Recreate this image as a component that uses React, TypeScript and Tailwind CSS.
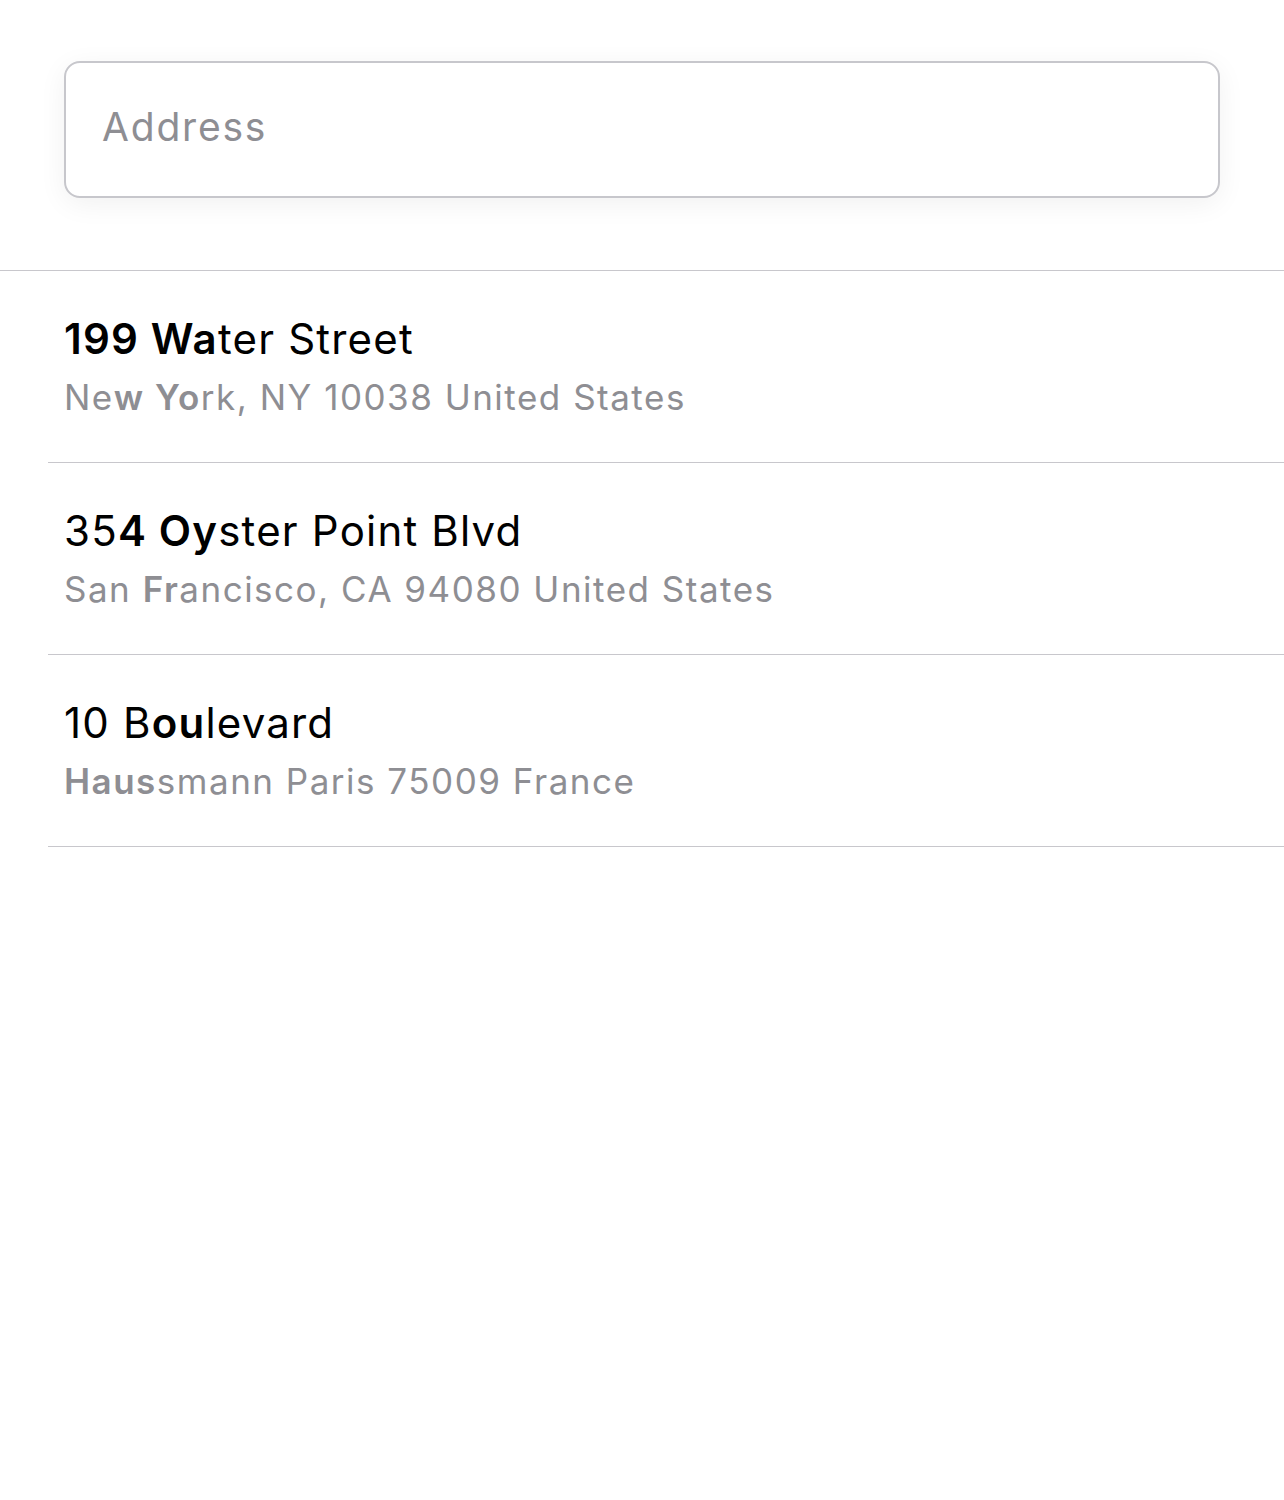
import React from "react";

type Part = { text: string; bold?: boolean };
type Place = { id: number; title: Part[]; subtitle: Part[] };

const places: Place[] = [
  {
    id: 1,
    title: [{ text: "199 Wa", bold: true }, { text: "ter Street" }],
    subtitle: [{ text: "Ne" }, { text: "w Yo", bold: true }, { text: "rk, NY 10038 United States" }],
  },
  {
    id: 2,
    title: [{ text: "35" }, { text: "4 Oy", bold: true }, { text: "ster Point Blvd" }],
    subtitle: [{ text: "San " }, { text: "Fr", bold: true }, { text: "ancisco, CA 94080 United States" }],
  },
  {
    id: 3,
    title: [{ text: "10 B" }, { text: "ou", bold: true }, { text: "levard" }],
    subtitle: [{ text: "Haus", bold: true }, { text: "smann Paris 75009 France" }],
  },
];

function Highlight({ parts }: { parts: Part[] }) {
  return (
    <>
      {parts.map((p, i) => (
        <span key={i} className={p.bold ? "font-semibold" : "font-normal"}>
          {p.text}
        </span>
      ))}
    </>
  );
}

export default function App() {
  return (
    <div className="min-h-[1500px] bg-white font-['Inter','Noto_Sans',sans-serif] antialiased">
      {/* search box */}
      <div className="h-[271px] border-b border-[#c8c7cc] pl-[64px] pr-[64px] pt-[61px]">
        <div className="flex h-[137px] items-center rounded-[16px] border-2 border-[#c7c7cc] bg-white pb-[4px] pl-[36px] shadow-[0_6px_28px_rgba(0,0,0,0.06)]">
          <input
            className="w-full bg-transparent text-[39px] tracking-[1.8px] text-black outline-none placeholder:text-[#8e8e93]"
            placeholder="Address"
          />
        </div>
      </div>

      {/* results */}
      <ul className="pl-[48px]">
        {places.map((place) => (
          <li key={place.id} className="h-[192px] border-b border-[#c8c7cc] pl-4 pt-[44px]">
            <p className="text-[42px] leading-[48px] tracking-[1.2px] text-black">
              <Highlight parts={place.title} />
            </p>
            <p className="mt-[13px] text-[35px] leading-[42px] tracking-[1.5px] text-[#8e8e93]">
              <Highlight parts={place.subtitle} />
            </p>
          </li>
        ))}
      </ul>
    </div>
  );
}
